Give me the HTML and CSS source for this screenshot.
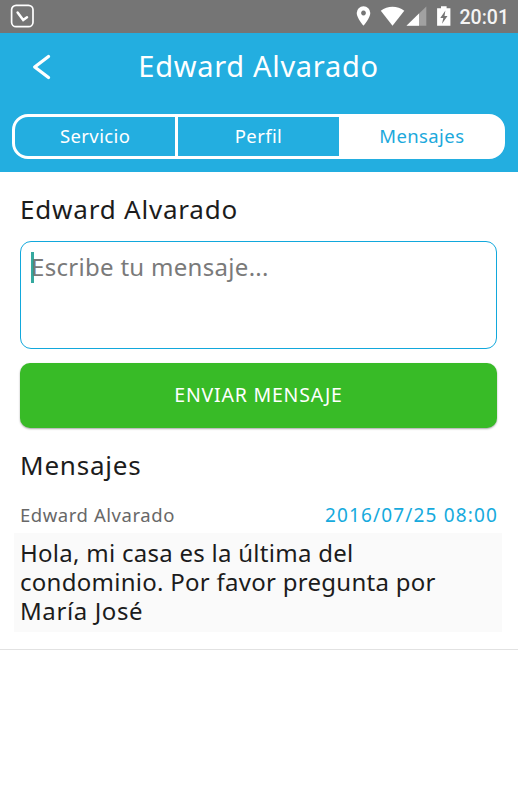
FILE: index.html
```html
<!DOCTYPE html>
<html lang="es">

<head>
  <meta charset="UTF-8">
  <meta name="viewport" content="width=device-width, initial-scale=1.0">
  <title>Mensajes - Edward Alvarado</title>

  <link rel="stylesheet" href="styles.css">
</head>

<body>
  <div class="statusbar">
    <svg class="app-icon" width="24" height="24" viewBox="0 0 24 24">
      <rect x="1.6" y="1.3" width="21.4" height="21.4" rx="4.5" fill="none" stroke="#fff" stroke-width="1.7"/>
      <path d="M7.6 8.6 L13.2 16 L17 13.2" fill="none" stroke="#fff" stroke-width="2.5" stroke-linecap="round"/>
    </svg>
    <div class="status-right">
      <svg width="162" height="33" viewBox="356 0 162 33">
        <path fill="#fff" fill-rule="evenodd" d="M363.5 6.3 a6.8 6.8 0 0 1 6.8 6.8 c0 4.8 -6.8 12.7 -6.8 12.7 s-6.8 -7.9 -6.8 -12.7 a6.8 6.8 0 0 1 6.8 -6.8z M363.5 10.6 a2.4 2.4 0 1 0 0.01 0z"/>
        <path fill="#fff" d="M392.5 25.8 L380.8 10.8 C387.5 5.3 397.5 5.3 404.3 10.8z"/>
        <path fill="#a1a1a1" d="M426.3 6.5 V25.8 H406.5z"/>
        <path fill="#fff" d="M419 13.6 V25.8 H406.5z"/>
        <path fill="#fff" d="M441 6.2 h5.6 v2 h3.8 v17.6 h-13.3 V8.2 h3.9z"/>
        <path fill="#757575" d="M445.4 10.6 L440.3 18 h3 L442 23.8 L447.5 16 h-3z"/>
        <text class="clock" x="459.5" y="24">20:01</text>
      </svg>
    </div>
  </div>

  <header class="header">
    <div class="titlebar">
      <svg class="back" width="22" height="28" viewBox="0 0 22 28">
        <path d="M17.5 3.5 L3.7 14 L17.5 24.5" fill="none" stroke="#fff" stroke-width="3.3" stroke-linecap="round" stroke-linejoin="round"/>
      </svg>
      <h1>Edward Alvarado</h1>
    </div>
    <nav class="tabs">
      <a class="tab">Servicio</a>
      <a class="tab">Perfil</a>
      <a class="tab active">Mensajes</a>
    </nav>
  </header>

  <main>
    <h2>Edward Alvarado</h2>
    <div class="message-box"><span class="cursor"></span><span class="placeholder">Escribe tu mensaje...</span></div>
    <button type="button" class="send">ENVIAR MENSAJE</button>

    <h2 class="list-title">Mensajes</h2>
    <div class="message">
      <div class="meta">
        <span class="author">Edward Alvarado</span>
        <span class="date">2016/07/25 08:00</span>
      </div>
      <div class="text">
        <p>Hola, mi casa es la última del</p>
        <p>condominio. Por favor pregunta por</p>
        <p class="last">María José</p>
      </div>
    </div>
  </main>
</body>

</html>
```

FILE: styles.css
```css
* {
  box-sizing: border-box;
}

body {
  margin: 0;
  min-height: 100vh;
  background-color: #fff;
  color: #1c1c1c;
  font-family: "Noto Sans", "Open Sans", sans-serif;
}

h1, h2, p {
  margin: 0;
  font-weight: 400;
  white-space: nowrap;
}

.statusbar {
  display: flex;
  justify-content: space-between;
  height: 33px;
  background-color: #757575;
}

.app-icon {
  margin: 4px 0 0 10px;
}

.status-right svg {
  display: block;
}

.clock {
  font-family: Roboto, sans-serif;
  font-size: 19.5px;
  font-weight: 500;
  fill: #f4f4f4;
}

.header {
  height: 139px;
  padding: 0 13px 0 12px;
  background-color: #23aee0;
}

.titlebar {
  display: flex;
  align-items: center;
  height: 67px;
}

.back {
  margin-left: 19px;
}

h1 {
  flex: 1;
  margin-right: 41px;
  padding-bottom: 3px;
  color: #fff;
  font-size: 29px;
  letter-spacing: .7px;
  text-align: center;
}

.tabs {
  display: flex;
  height: 45px;
  margin-top: 14px;
  border: 3px solid #fff;
  border-radius: 16px;
}

.tab {
  display: flex;
  flex: 1;
  align-items: center;
  justify-content: center;
  padding-bottom: 3px;
  color: #fff;
  font-size: 18.5px;
  letter-spacing: .4px;
}

.tab + .tab {
  border-left: 3px solid #fff;
}

.tab.active {
  border-radius: 0 12px 12px 0;
  background-color: #fff;
  box-shadow: 1px 0 0 1px #fff;
  color: #1ca9dc;
}

main {
  padding: 19px 21px 0 20px;
}

h2 {
  font-size: 26px;
  line-height: 36px;
  letter-spacing: .8px;
}

.message-box {
  display: flex;
  height: 108px;
  margin-top: 14px;
  padding: 10px;
  border: 1.5px solid #12a8dc;
  border-radius: 11px;
}

.cursor {
  width: 3px;
  height: 31px;
  margin-right: -3px;
  background-color: #35a99f;
}

.placeholder {
  color: #7a7a7a;
  font-size: 24px;
  line-height: 29px;
  letter-spacing: .3px;
}

.send {
  display: block;
  width: 100%;
  height: 65px;
  margin-top: 14px;
  padding: 0 0 3px;
  border: 0;
  border-radius: 10px;
  background-color: #38bb27;
  box-shadow: 0 1px 2px rgba(0, 0, 0, .35);
  color: #fff;
  font-family: inherit;
  font-size: 19.5px;
  letter-spacing: .8px;
}

.list-title {
  margin-top: 19px;
}

.message {
  margin: 18px -21px 0 -20px;
  padding: 0 16px 17px 14px;
  border-bottom: 1px solid #e2e2e2;
}

.meta {
  display: flex;
  justify-content: space-between;
  height: 32px;
  padding: 0 5px 0 6px;
  font-size: 18.5px;
  line-height: 28px;
}

.author {
  color: #686868;
  letter-spacing: .55px;
}

.date {
  margin-right: -1px;
  color: #16aadd;
  font-size: 19px;
  letter-spacing: 1.15px;
}

.text {
  height: 99px;
  padding: 5px 6px;
  background-color: #fafafa;
  font-size: 24px;
  line-height: 29px;
  letter-spacing: .27px;
}

.last {
  letter-spacing: .6px;
}
```
